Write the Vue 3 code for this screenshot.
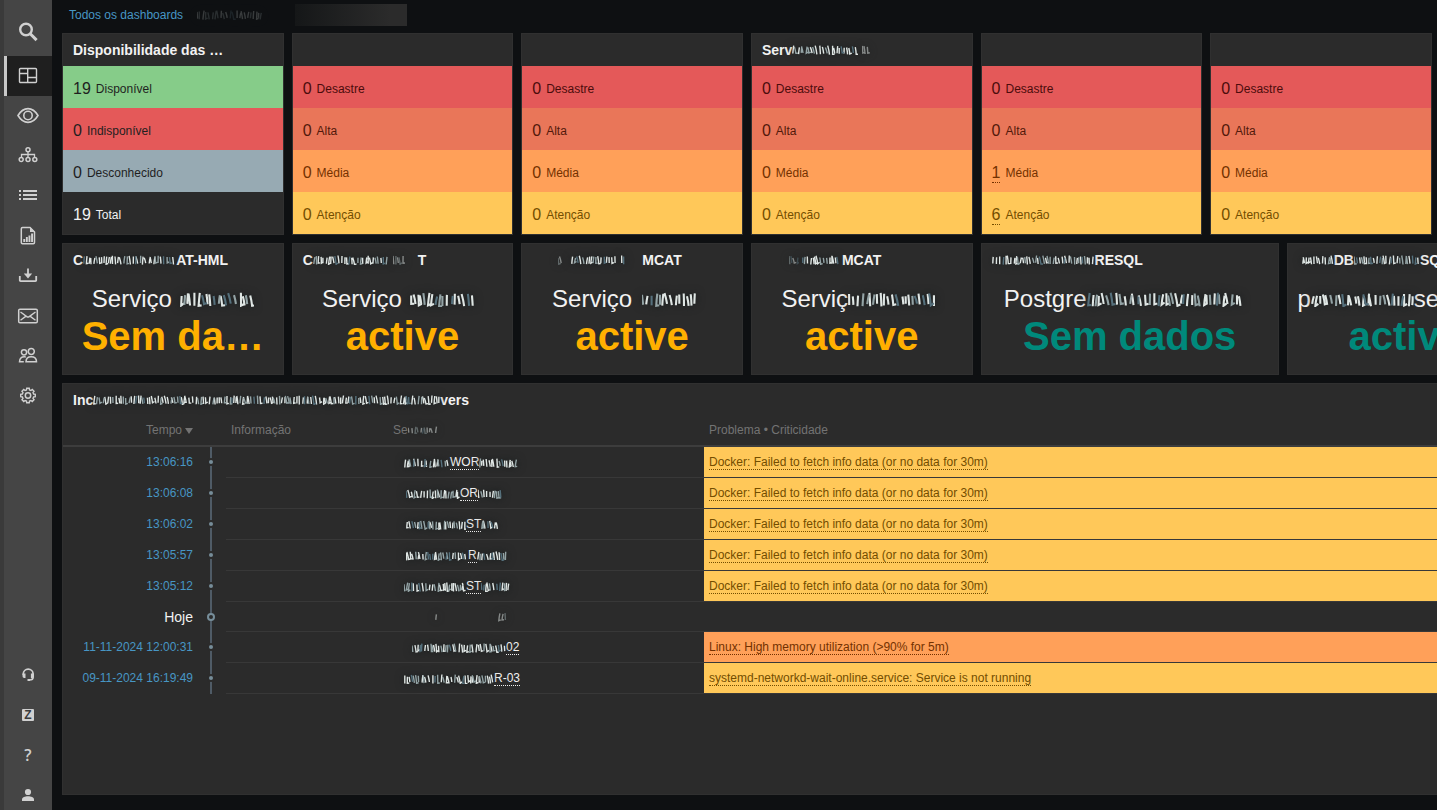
<script setup>
const circle = (x, y, r) => `M${x - r} ${y}a${r} ${r} 0 1 0 ${r * 2} 0a${r} ${r} 0 1 0 ${-r * 2} 0z`

// Outline of a cog with eight teeth
function cog(cx, cy, inner, outer) {
  const pts = []
  for (let i = 0; i < 8; i++) {
    const base = (i * Math.PI) / 4
    for (const [offset, r] of [[-0.26, inner], [-0.17, outer], [0.17, outer], [0.26, inner]]) {
      pts.push(`${(cx + r * Math.sin(base + offset)).toFixed(2)} ${(cy - r * Math.cos(base + offset)).toFixed(2)}`)
    }
  }
  return `M${pts.join('L')}Z`
}

const search = [
  { d: circle(10, 9.5, 5.8), w: 2.4 },
  { d: 'M14 13.500l6.600 6.600', w: 3 },
]

const nav = [
  { name: 'Dashboards', active: true, paths: [
    { d: 'M4.500 4.500h15a1 1 0 0 1 1 1v12a1 1 0 0 1-1 1h-15a1 1 0 0 1-1-1v-12a1 1 0 0 1 1-1zM11.700 4.500v14M3.500 9.500h8.200M11.700 13.500h8.800', w: 1.4 },
  ] },
  { name: 'Monitoramento', paths: [
    { d: 'M2 11.500C4.700 7 8 4.600 12 4.600s7.300 2.400 10 6.900C19.300 16 16 18.400 12 18.400S4.700 16 2 11.500z', w: 1.6 },
    { d: circle(12, 11.5, 4.2), w: 1.6 },
  ] },
  { name: 'Serviços', paths: [
    { d: circle(12, 5.800, 2) + circle(5.200, 15.500, 2) + circle(12, 15.500, 2) + circle(18.800, 15.500, 2), w: 1.500 },
    { d: 'M12 8v5.500M5.500 13.500v-3h13v3', w: 1.300 },
  ] },
  { name: 'Inventário', paths: [
    { d: 'M3 7h2M7 7h14M3 11h2M7 11h14M3 15h2M7 15h14', w: 2 },
  ] },
  { name: 'Relatórios', paths: [
    { d: 'M6.500 3.500h7.500l4.500 4.500v10.500a1.200 1.200 0 0 1-1.200 1.200H6.500a1.200 1.200 0 0 1-1.200-1.200V4.700a1.200 1.200 0 0 1 1.200-1.200z', w: 1.500 },
    { d: 'M14 3l5 5h-5zM7.300 15h1.900v3H7.300zM9.900 13h1.900v5H9.900zM12.500 11.500h1.900V18h-1.900zM15.100 9.500H17V18h-1.900z', solid: true },
  ] },
  { name: 'Coleta de dados', paths: [
    { d: 'M12 4.500v6', w: 1.800 },
    { d: 'M7.800 9.500h8.400L12 14.500z', solid: true },
    { d: 'M3.800 12v4.300a.8.8 0 0 0 .8.8h14.800a.8.8 0 0 0 .8-.8V12', w: 1.800 },
  ] },
  { name: 'Alertas', paths: [
    { d: 'M4 5.200h16a1.300 1.300 0 0 1 1.300 1.300v11a1.300 1.300 0 0 1-1.300 1.300H4a1.300 1.300 0 0 1-1.300-1.300v-11A1.300 1.300 0 0 1 4 5.200z', w: 1.500 },
    { d: 'M4.500 8l6.300 4.600a2 2 0 0 0 2.400 0L19.500 8M4.500 16.200l5.200-3.800M19.500 16.200l-5.200-3.800', w: 1.400 },
  ] },
  { name: 'Usuários', paths: [
    { d: circle(15.300, 7.500, 3) + circle(8, 8.300, 2.600), w: 1.500 },
    { d: 'M10 17.800c0-3.300 1.800-5 5.200-5s5.300 1.700 5.300 5zM9.800 12.900c-4 -.6-6.200 1-6.300 4.900h4.300', w: 1.500 },
  ] },
  { name: 'Administração', paths: [
    { d: cog(12, 11.500, 5.800, 7.400), w: 1.400 },
    { d: circle(12, 11.500, 2.700), w: 1.500 },
  ] },
]

const support = [
  { name: 'Suporte', paths: [
    { d: 'M7.300 12V11a4.900 4.900 0 0 1 9.800 0v3c0 2.200-1.200 3-3.600 3', w: 1.700 },
    { d: 'M6.500 10.500h3v4.500H8.200A1.700 1.700 0 0 1 6.500 13.300zM17.900 10.500h-3v4.500h1.300a1.700 1.700 0 0 0 1.700-1.700zM11.500 16h2.500v2h-2.500z', solid: true },
  ] },
  { name: 'Integrações', glyph: 'Z', boxed: true },
  { name: 'Ajuda', glyph: '?' },
  { name: 'Perfil', paths: [
    { d: circle(12, 9, 3.100), solid: true },
    { d: 'M6 18v-1.500c0-2.300 3-3.200 6-3.200s6 .9 6 3.200V18z', solid: true },
  ] },
]

// A title or name is a run of text pieces, redaction marks {m: width, s: seed} and gaps {g: width}
const severities = [
  ['disaster', 'Desastre'],
  ['high', 'Alta'],
  ['average', 'Média'],
  ['warning', 'Atenção'],
]
const totals = (...counts) => severities.map(([kind, label], i) => ({ kind, label, count: counts[i] }))

const summaries = [
  { title: [{ t: 'Disponibilidade das …' }], rows: [
    { kind: 'ok', label: 'Disponível', count: 19 },
    { kind: 'down', label: 'Indisponível', count: 0 },
    { kind: 'unknown', label: 'Desconhecido', count: 0 },
    { kind: 'total', label: 'Total', count: 19 },
  ] },
  { title: [], rows: totals(0, 0, 0, 0) },
  { title: [], rows: totals(0, 0, 0, 0) },
  { title: [{ t: 'Serv' }, { m: 66, s: 3 }, { g: 4 }, { m: 8, s: 5, dim: true }], rows: totals(0, 0, 0, 0) },
  { title: [], rows: totals(0, 0, 1, 6) },
  { title: [], rows: totals(0, 0, 0, 0) },
]

const items = [
  { tone: 'amber', value: 'Sem da…',
    title: [{ t: 'C' }, { m: 93, s: 11 }, { t: 'AT-HML' }],
    label: [{ t: 'Serviço' }, { g: 8 }, { m: 74, s: 12 }] },
  { tone: 'amber', value: 'active',
    title: [{ t: 'C' }, { m: 76, s: 21 }, { g: 4 }, { m: 12, s: 22, dim: true }, { g: 13 }, { t: 'T' }],
    label: [{ t: 'Serviço' }, { g: 8 }, { m: 66, s: 23 }, { g: 7 }] },
  { tone: 'amber', value: 'active',
    title: [{ g: 26 }, { m: 6, s: 31, dim: true }, { g: 7 }, { m: 46, s: 32 }, { g: 4 }, { m: 6, s: 33 }, { g: 15 }, { t: 'MCAT' }],
    label: [{ t: 'Serviço' }, { g: 10 }, { m: 58, s: 34 }, { g: 12 }] },
  { tone: 'amber', value: 'active',
    title: [{ g: 27 }, { m: 10, s: 41, dim: true }, { g: 3 }, { m: 40, s: 42 }, { t: 'MCAT' }],
    label: [{ t: 'Serviç' }, { m: 90, s: 43 }, { g: 4 }] },
  { tone: 'teal', value: 'Sem dados', size: 'wide',
    title: [{ m: 103, s: 51 }, { t: 'RESQL' }],
    label: [{ t: 'Postgre' }, { m: 155, s: 52 }, { g: 14 }] },
  { tone: 'teal', value: 'active', size: 'edge',
    title: [{ g: 4 }, { m: 32, s: 61 }, { t: 'DB' }, { m: 66, s: 62 }, { t: 'SQL' }],
    label: [{ t: 'p' }, { m: 103, s: 63 }, { t: 'se' }, { m: 74, s: 64 }] },
]

const incidentTitle = [{ t: 'Inc' }, { m: 347, s: 71 }, { t: 'vers' }]

const docker = 'Docker: Failed to fetch info data (or no data for 30m)'
const problems = [
  { time: '13:06:16', kind: 'warning', text: docker, host: [{ m: 46, s: 81 }, { t: 'WOR' }, { m: 40, s: 82 }] },
  { time: '13:06:08', kind: 'warning', text: docker, host: [{ g: 2 }, { m: 54, s: 83 }, { t: 'OR' }, { m: 25, s: 84 }] },
  { time: '13:06:02', kind: 'warning', text: docker, host: [{ g: 2 }, { m: 60, s: 85 }, { t: 'ST' }, { m: 18, s: 86 }] },
  { time: '13:05:57', kind: 'warning', text: docker, host: [{ g: 2 }, { m: 62, s: 87 }, { t: 'R' }, { m: 30, s: 88 }] },
  { time: '13:05:12', kind: 'warning', text: docker, host: [{ m: 62, s: 89 }, { t: 'ST' }, { m: 30, s: 90 }] },
  { day: 'Hoje', host: [{ g: 31 }, { m: 3, s: 91, dim: true }, { g: 60 }, { m: 10, s: 92, dim: true }] },
  { time: '11-11-2024 12:00:31', kind: 'average', text: 'Linux: High memory utilization (>90% for 5m)', host: [{ g: 8 }, { m: 94, s: 93 }, { t: '02' }] },
  { time: '09-11-2024 16:19:49', kind: 'warning', text: 'systemd-networkd-wait-online.service: Service is not running', host: [{ m: 90, s: 94 }, { t: 'R-03' }] },
]

// Redaction mark: short uneven strokes, three tones, repeatable for a given seed
function marks(width, seed) {
  let state = seed * 7919 + 17
  const rnd = () => {
    state = (state * 1103515245 + 12345) % 2147483648
    return state / 2147483648
  }
  const out = ['', '', '']
  let x = 0.8
  while (x < width - 1) {
    const roll = rnd()
    const tone = roll < 0.62 ? 0 : roll < 0.88 ? 1 : 2
    const top = 0.5 + rnd() * 2.5
    const bottom = 9.6 - rnd() * 1.8
    const lean = (rnd() - 0.6) * 3
    const from = Math.max(0, Math.min(width - 1, x + lean))
    out[tone] += `M${from.toFixed(1)} ${top.toFixed(1)}Q${(x + lean * 0.3).toFixed(1)} ${((top + bottom) / 2).toFixed(1)} ${x.toFixed(1)} ${bottom.toFixed(1)}`
    if (rnd() > 0.7) out[tone] += `l2 ${(rnd() * -1.500).toFixed(1)}`
    x += 1.500 + rnd() * 2.100
  }
  return out
}
</script>

<template>
  <div class="app">
    <aside class="sidebar">
      <button class="search" type="button" aria-label="Pesquisar">
        <svg class="icon" viewBox="0 0 24 24" aria-hidden="true">
          <path v-for="(p, i) in search" :key="i" :d="p.d" :stroke-width="p.w" />
        </svg>
      </button>
      <nav class="menu" aria-label="Principal">
        <a v-for="item in nav" :key="item.name" href="#" class="menu-link" :class="{ active: item.active }" :aria-label="item.name">
          <svg class="icon" viewBox="0 0 24 24" aria-hidden="true">
            <path v-for="(p, i) in item.paths" :key="i" :d="p.d" :stroke-width="p.w" :class="{ solid: p.solid }" />
          </svg>
        </a>
      </nav>
      <nav class="support" aria-label="Suporte e perfil">
        <a v-for="item in support" :key="item.name" href="#" class="support-link" :aria-label="item.name">
          <span v-if="item.glyph" class="glyph" :class="{ boxed: item.boxed }">{{ item.glyph }}</span>
          <svg v-else class="icon" viewBox="0 0 24 24" aria-hidden="true">
            <path v-for="(p, i) in item.paths" :key="i" :d="p.d" :stroke-width="p.w" :class="{ solid: p.solid }" />
          </svg>
        </a>
      </nav>
    </aside>

    <main class="main">
      <header class="crumbs">
        <a href="#">Todos os dashboards</a>
        <svg class="mark crumb-mark" width="66" height="10" viewBox="0 0 66 10" aria-hidden="true">
          <path v-for="(d, k) in marks(66, 2)" :key="k" :d="d" :class="'tone' + k" />
        </svg>
        <span class="crumb-tab"></span>
      </header>

      <div class="board">
        <section v-for="(card, n) in summaries" :key="'s' + n" class="card summary">
          <h2 class="card-title run">
            <template v-for="(p, i) in card.title" :key="i">
              <span v-if="p.t">{{ p.t }}</span>
              <svg v-else-if="p.m" class="mark" :class="{ dim: p.dim }" :width="p.m" height="10" :viewBox="`0 0 ${p.m} 10`" aria-hidden="true">
                <path v-for="(d, k) in marks(p.m, p.s)" :key="k" :d="d" :class="'tone' + k" />
              </svg>
              <i v-else :style="{ width: p.g + 'px' }"></i>
            </template>
          </h2>
          <div v-for="row in card.rows" :key="row.label" class="total-row" :class="row.kind">
            <a v-if="row.count && card.title.length === 0" href="#" class="count linked">{{ row.count }}</a>
            <span v-else class="count">{{ row.count }}</span>
            <span>{{ row.label }}</span>
          </div>
        </section>

        <section v-for="(item, n) in items" :key="'i' + n" class="card item" :class="item.size">
          <h2 class="card-title run">
            <template v-for="(p, i) in item.title" :key="i">
              <span v-if="p.t">{{ p.t }}</span>
              <svg v-else-if="p.m" class="mark" :class="{ dim: p.dim }" :width="p.m" height="10" :viewBox="`0 0 ${p.m} 10`" aria-hidden="true">
                <path v-for="(d, k) in marks(p.m, p.s)" :key="k" :d="d" :class="'tone' + k" />
              </svg>
              <i v-else :style="{ width: p.g + 'px' }"></i>
            </template>
          </h2>
          <div class="item-body">
            <p class="item-label run">
              <template v-for="(p, i) in item.label" :key="i">
                <span v-if="p.t">{{ p.t }}</span>
                <svg v-else-if="p.m" class="mark" :width="p.m" height="15" :viewBox="`0 0 ${p.m / 1.5} 10`" aria-hidden="true">
                  <path v-for="(d, k) in marks(p.m / 1.5, p.s)" :key="k" :d="d" :class="'tone' + k" />
                </svg>
                <i v-else :style="{ width: p.g + 'px' }"></i>
              </template>
            </p>
            <p class="item-value" :class="item.tone">{{ item.value }}</p>
          </div>
        </section>

        <section class="card incidents">
          <h2 class="card-title run">
            <template v-for="(p, i) in incidentTitle" :key="i">
              <span v-if="p.t">{{ p.t }}</span>
              <svg v-else class="mark" :width="p.m" height="10" :viewBox="`0 0 ${p.m} 10`" aria-hidden="true">
                <path v-for="(d, k) in marks(p.m, p.s)" :key="k" :d="d" :class="'tone' + k" />
              </svg>
            </template>
          </h2>
          <table>
            <colgroup>
              <col class="c-time" /><col class="c-line" /><col class="c-info" /><col class="c-host" /><col />
            </colgroup>
            <thead>
              <tr>
                <th class="time" scope="col"><span>Tempo</span><span class="sort"></span></th>
                <th aria-hidden="true"></th>
                <th scope="col">Informação</th>
                <th scope="col"><span class="run">Se<svg class="mark dim" width="30" height="8" viewBox="0 0 30 10" preserveAspectRatio="none" aria-hidden="true"><path v-for="(d, k) in marks(30, 6)" :key="k" :d="d" :class="'tone' + k" /></svg></span></th>
                <th scope="col">Problema • Criticidade</th>
              </tr>
            </thead>
            <tbody>
              <tr v-for="(row, n) in problems" :key="n" :class="{ day: row.day }">
                <td class="time">
                  <span v-if="row.day">{{ row.day }}</span>
                  <a v-else href="#">{{ row.time }}</a>
                </td>
                <td class="line"><span class="dot"></span></td>
                <td></td>
                <td class="host">
                  <span class="run">
                    <template v-for="(p, i) in row.host" :key="i">
                      <a v-if="p.t" href="#">{{ p.t }}</a>
                      <svg v-else-if="p.m" class="mark" :class="{ dim: p.dim }" :width="p.m" height="10" :viewBox="`0 0 ${p.m} 10`" aria-hidden="true">
                        <path v-for="(d, k) in marks(p.m, p.s)" :key="k" :d="d" :class="'tone' + k" />
                      </svg>
                      <i v-else :style="{ width: p.g + 'px' }"></i>
                    </template>
                  </span>
                </td>
                <td class="problem" :class="row.kind"><a v-if="row.text" href="#">{{ row.text }}</a></td>
              </tr>
            </tbody>
          </table>
        </section>
      </div>
    </main>
  </div>
</template>

<style>
body {
  margin: 0;
  background: #0e1012;
}
</style>

<style scoped>
.app {
  display: flex;
  min-height: 100vh;
  background: #0e1012;
  color: #f2f2f2;
  font: 12px/14px "Liberation Sans", Arial, sans-serif;
}
a {
  color: #4796c4;
  text-decoration: none;
}

/* Sidebar */
.sidebar {
  display: flex;
  flex-direction: column;
  flex: none;
  box-sizing: border-box;
  width: 52px;
  border-left: 4px solid #3a3a3a;
  background: #454545;
}
.search {
  display: flex;
  align-items: center;
  justify-content: center;
  height: 56px;
  padding: 8px 0 0;
  border: 0;
  background: none;
}
.menu-link,
.support-link {
  display: flex;
  align-items: center;
  justify-content: center;
  box-sizing: border-box;
  height: 40px;
}
.menu-link.active {
  background: #1f1f1f;
  box-shadow: inset 3px 0 #c8c8c8;
}
.icon {
  width: 24px;
  height: 24px;
  fill: none;
  stroke: #d0d0d0;
}
.icon .solid {
  fill: #d0d0d0;
  stroke: none;
}
.support {
  display: grid;
  gap: 10px;
  margin-top: auto;
}
.support-link {
  height: 30px;
}
.glyph {
  color: #d0d0d0;
  font-family: "Open Sans", sans-serif;
  font-size: 16px;
  font-weight: 600;
  line-height: 18px;
}
.glyph.boxed {
  width: 12px;
  height: 12px;
  border-radius: 1px;
  background: #d0d0d0;
  color: #3a3a3a;
  font-family: "Liberation Sans", Arial, sans-serif;
  font-size: 12px;
  font-weight: bold;
  line-height: 12px;
  text-align: center;
}

/* Page */
.main {
  display: flex;
  flex: 1;
  flex-direction: column;
  min-width: 0;
  padding: 0 0 15px 10px;
  overflow: hidden;
}
.crumbs {
  display: flex;
  align-items: center;
  height: 30px;
  padding: 0 0 3px 7px;
}
.crumb-mark {
  margin-left: 14px;
  opacity: 0.2;
}
.crumb-tab {
  width: 112px;
  height: 22px;
  margin-left: 32px;
  background: linear-gradient(90deg, #151718, #2b2b2b 85%);
}
.board {
  --col: calc((100vw - 59px) / 18 - 8px);
  display: grid;
  flex: 1;
  grid-template-columns: repeat(20, var(--col));
  grid-template-rows: auto auto 1fr;
  gap: 8px;
}
.card {
  min-width: 0;
  border: 1px solid #303030;
  background: #2b2b2b;
}
.summary,
.item {
  grid-column: span 3;
}
.summary:nth-child(6) {
  grid-column: 16 / span 3;
}
.item:nth-child(7) {
  grid-column: 1 / span 3;
}
.item.wide {
  grid-column: span 4;
}
.item.edge {
  grid-column: 17 / span 3;
  min-width: 235px;
}
.incidents {
  grid-column: 1 / -1;
}
.card-title {
  height: 32px;
  margin: 0;
  padding: 0 10px;
  font-size: 14px;
  font-weight: bold;
  line-height: 32px;
  white-space: nowrap;
}

/* Text runs with redaction marks */
.run {
  display: flex;
  align-items: center;
}
.run i,
.mark {
  flex: none;
}
.mark {
  fill: none;
  stroke-width: 1.4;
  filter: drop-shadow(0 0 4px #14191a);
}
.mark.dim {
  opacity: 0.5;
}
.tone0 {
  stroke: #dfe6e4;
}
.tone1 {
  stroke: #93a3a5;
}
.tone2 {
  stroke: #55707c;
}

/* Totals */
.total-row {
  display: flex;
  align-items: center;
  gap: 5px;
  height: 42px;
  padding: 4px 10px 0;
  box-sizing: border-box;
}
.count {
  color: inherit;
  font-size: 16px;
  line-height: 18px;
}
.count.linked {
  margin-top: 1px;
  border-bottom: 1px dotted;
}
.ok {
  background: #86cc89;
  color: #1f1f1f;
}
.down {
  background: #e45959;
  color: #1f1f1f;
}
.unknown {
  background: #97aab3;
  color: #1f1f1f;
}
.disaster {
  background: #e45959;
  color: #4b0c0c;
}
.high {
  background: #e97659;
  color: #52190b;
}
.average {
  background: #ffa059;
  color: #733100;
}
.warning {
  background: #ffc859;
  color: #734d00;
}

/* Item values */
.item-body {
  padding: 9px 10px 15px;
}
.item-label,
.item-value {
  margin: 0;
  white-space: nowrap;
}
.item-label {
  justify-content: center;
  font-size: 24px;
  line-height: 28px;
}
.item-value {
  font-size: 40px;
  font-weight: bold;
  line-height: 46px;
  text-align: center;
}
.amber {
  color: #ffb000;
}
.teal {
  color: #00897b;
}

/* Incidents */
table {
  width: 100%;
  border-collapse: separate;
  border-spacing: 0;
  table-layout: fixed;
}
.c-time {
  width: 132px;
}
.c-line {
  width: 31px;
}
.c-info {
  width: 162px;
}
.c-host {
  width: 316px;
}
th {
  height: 27px;
  padding: 0 5px 2px;
  border-bottom: 2px solid #3d3d3d;
  color: #737373;
  font-weight: normal;
  text-align: left;
}
td {
  height: 30px;
  padding: 0 5px;
  border-bottom: 1px solid #383838;
  background-clip: padding-box;
}
.day td {
  height: 29px;
}
.time {
  padding-right: 2px;
  text-align: right;
}
td.time,
td.line {
  border-bottom-color: transparent;
}
.day .time {
  color: #f2f2f2;
  font-size: 14px;
}
.sort {
  display: inline-block;
  margin-left: 3px;
  border: 4px solid transparent;
  border-top: 6px solid #737373;
  border-bottom: 0;
}
td.line {
  padding: 0;
  background: linear-gradient(#4f5b66, #4f5b66) center / 2px 100% no-repeat border-box;
}
.dot {
  display: block;
  width: 4px;
  height: 4px;
  margin: 0 auto;
  border-radius: 50%;
  background: #768d99;
  box-shadow: 0 0 0 2px #2b2b2b;
}
.day .dot {
  width: 4px;
  height: 4px;
  border: 2px solid #768d99;
  background: #2b2b2b;
  box-shadow: none;
}
.host {
  padding-left: 16px;
}
.host a {
  border-bottom: 1px dotted;
  color: #f2f2f2;
}
.host .run {
  padding-top: 1px;
  line-height: 14px;
}
.problem a {
  border-bottom: 1px dotted;
  color: inherit;
}
</style>
